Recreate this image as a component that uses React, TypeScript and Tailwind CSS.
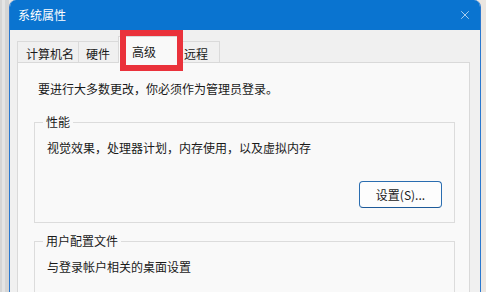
import { X } from 'lucide-react'

const FONT = { fontFamily: '"Microsoft YaHei UI", "Noto Sans CJK SC", "Noto Sans", sans-serif' }

function Tab({ label, width, active, pl }: { label: string; width: number; active?: boolean; pl: number }) {
  if (active) {
    return (
      <div
        className="relative z-10 -mb-px -mx-[2px] flex h-[27px] items-start border border-b-0 border-[#d9d9d9] bg-[#f9f9f9] pt-[7px] text-[12px] leading-[16px] text-[#1a1a1a]"
        style={{ width, paddingLeft: pl }}
      >
        {label}
      </div>
    )
  }
  return (
    <div
      className="flex h-[21px] items-start border border-b-0 border-r-0 border-[#dadada] bg-[#f0f0f0] pt-[4px] text-[12px] leading-[16px] text-[#1a1a1a] last:border-r"
      style={{ width, paddingLeft: pl }}
    >
      {label}
    </div>
  )
}

function Group({ title, children }: { title: string; children: React.ReactNode }) {
  return (
    <fieldset className="mr-[14px] ml-[16px] border border-[#dcdcdc] px-[12px]">
      <legend className="-ml-[4px] px-[3px] text-[12px] leading-[16px] text-[#1a1a1a]">{title}</legend>
      {children}
    </fieldset>
  )
}

export default function App() {
  return (
    <div className="relative flex h-[292px] w-[486px] overflow-hidden bg-[#ebe6e1]" style={FONT}>
      {/* desktop behind, left */}
      <div className="flex w-[9px] shrink-0 bg-[#d5d5d5]">
        <div className="ml-[2px] w-[3px] bg-[#e4e4e4]" />
      </div>

      {/* window */}
      <div className="flex w-[472px] shrink-0 flex-col overflow-hidden rounded-t-[7px] border-x border-[#2a78cf] bg-[#f0f0f0]">
        <div className="flex h-[30px] shrink-0 items-center justify-between bg-[#0a74d0] pr-[8px] pl-[8px]">
          <span className="text-[12px] leading-[16px] text-white">系统属性</span>
          <X className="h-[14px] w-[14px] text-white" strokeWidth={1.1} />
        </div>

        <div className="flex flex-1 flex-col pt-[7px] pr-[10px] pl-[7px]">
          <div className="flex h-[25px] items-end">
            <Tab label="计算机名" width={61} pl={8} />
            <Tab label="硬件" width={42} pl={7} />
            <Tab label="高级" width={62} pl={13} active />
            <Tab label="远程" width={42} pl={5} />
          </div>

          <div className="flex-1 border border-[#d9d9d9] bg-[#f9f9f9] pt-[18px]">
            <p className="mb-[17px] pl-[20px] text-[12px] leading-[16px] text-[#1a1a1a]">
              要进行大多数更改，你必须作为管理员登录。
            </p>

            <Group title="性能">
              <p className="pt-[10px] text-[12px] leading-[16px] text-[#1a1a1a]">
                视觉效果，处理器计划，内存使用，以及虚拟内存
              </p>
              <div className="mt-[25px] mb-[14px] flex justify-end">
                <button className="h-[27px] w-[83px] rounded-[4px] border border-[#2a6db0] border-b-[#1d5a99] bg-[#fdfdfd] text-[12px] leading-[16px] text-[#1a1a1a]">
                  设置(S)...
                </button>
              </div>
            </Group>

            <div className="h-[10px]" />

            <Group title="用户配置文件">
              <p className="pt-[10px] pb-[20px] text-[12px] leading-[16px] text-[#1a1a1a]">
                与登录帐户相关的桌面设置
              </p>
            </Group>
          </div>
        </div>
      </div>

      {/* red annotation box */}
      <div className="pointer-events-none absolute top-[30px] left-[120px] z-20 h-[41px] w-[63px] border-[6px] border-[#ea323b]" />
    </div>
  )
}
